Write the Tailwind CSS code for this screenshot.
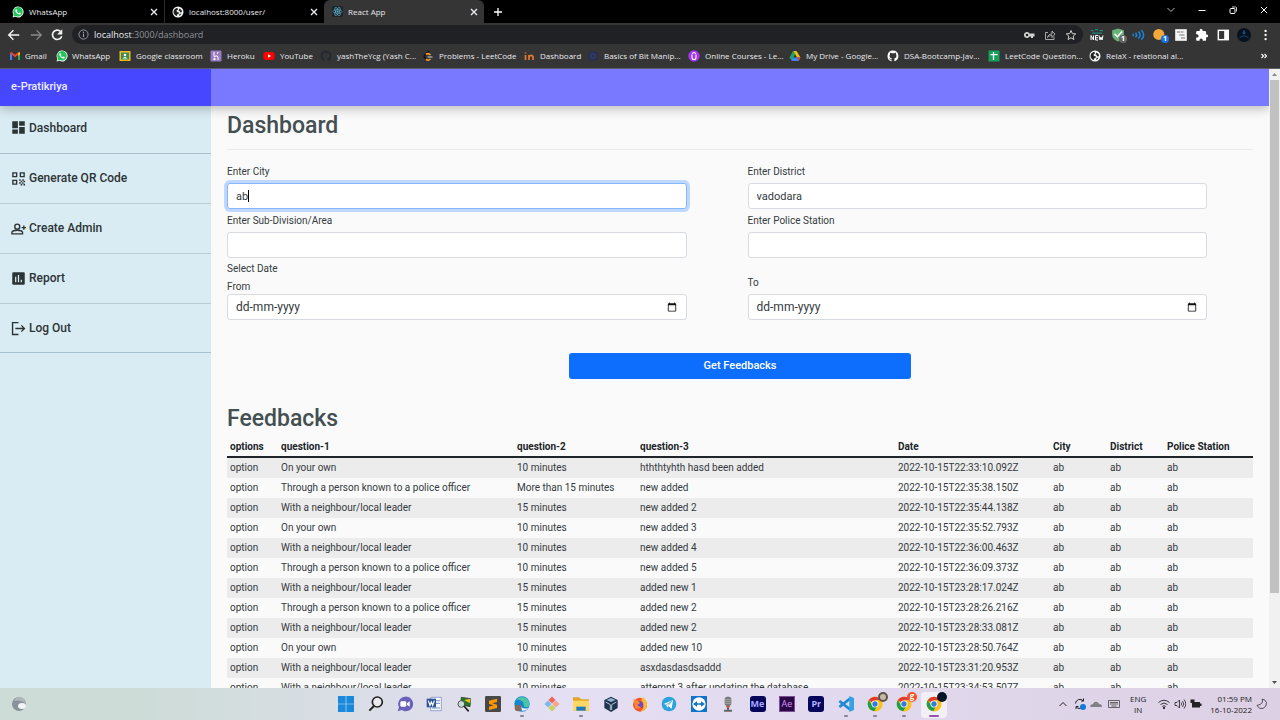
<!DOCTYPE html>
<html lang="en-IN">
<head>
<meta charset="utf-8">
<meta name="viewport" content="width=device-width, initial-scale=1">
<title>React App</title>
<script src="https://cdn.jsdelivr.net/npm/@tailwindcss/browser@4"></script>
</head>
<body class="flex h-screen flex-col overflow-hidden bg-[#fafafa] font-['Roboto',sans-serif] text-[#343a40]">

<svg class="hidden" aria-hidden="true">
  <symbol id="whatsapp" viewBox="0 0 24 24"><path fill="#fff" d="M1 23l1.700-5.600A11 11 0 1 1 7 21.600z"/><path fill="#25c45a" d="M2.800 21.200l1.300-4.300A9.500 9.500 0 1 1 7.500 20z"/><path fill="#fff" d="M8.500 6.500c-.8 0-2 1-2 2.700 0 3 5 8 8.500 8 1.700 0 2.800-1.200 2.800-2.500 0-.4-2.400-1.700-2.900-1.700-.4 0-1 1.500-1.500 1.500-.9 0-3.700-2.400-3.700-3.300 0-.4 1-1 1-1.600 0-.6-1-3.100-2.200-3.100z"/></symbol>
  <symbol id="globe" viewBox="0 0 24 24"><circle cx="12" cy="12" r="11" fill="#f1f3f4"/><path fill="#222" d="M4 8c2-3 5-4 7-4l1 3-3 2 1 3 4 1-1 3-3 1v3c-4-1-7-4-7-8zM15 5l4 3 1 4-3 1-2-3-2-1zM15 16l4-1-2 3-3 2z"/></symbol>
  <symbol id="react" viewBox="0 0 24 24"><rect width="24" height="24" rx="3" fill="#20232a"/><g fill="none" stroke="#5bb9d1" stroke-width="1.300"><ellipse cx="12" cy="12" rx="10" ry="4"/><ellipse cx="12" cy="12" rx="10" ry="4" transform="rotate(60 12 12)"/><ellipse cx="12" cy="12" rx="10" ry="4" transform="rotate(120 12 12)"/></g><circle cx="12" cy="12" r="2" fill="#5bb9d1"/></symbol>
  <symbol id="close" viewBox="0 0 10 10"><path d="M2 2l6 6M8 2L2 8" stroke="currentColor" stroke-width="1.400" fill="none"/></symbol>
  <symbol id="github" viewBox="0 0 24 24"><path fill="currentColor" d="M12 1a11 11 0 0 0-3.500 21.400c.6.100.8-.2.800-.5v-2c-3 .7-3.700-1.300-3.700-1.300-.5-1.300-1.200-1.600-1.200-1.600-1-.7.100-.7.100-.7 1.100.1 1.700 1.100 1.700 1.100 1 1.700 2.600 1.200 3.200.9.100-.7.400-1.200.7-1.500-2.400-.3-5-1.200-5-5.400 0-1.200.4-2.200 1.100-2.900-.1-.3-.5-1.400.1-2.900 0 0 1-.3 3 1.100a10.500 10.500 0 0 1 5.500 0c2.100-1.400 3-1.100 3-1.100.6 1.500.2 2.600.1 2.900.7.700 1.100 1.700 1.100 2.900 0 4.200-2.600 5.100-5 5.400.4.300.8 1 .8 2v3c0 .3.200.6.800.5A11 11 0 0 0 12 1z"/></symbol>
  <symbol id="calendar" viewBox="0 0 24 24"><path fill="#111" d="M20 3h-1V1h-2v2H7V1H5v2H4a2 2 0 0 0-2 2v16a2 2 0 0 0 2 2h16a2 2 0 0 0 2-2V5a2 2 0 0 0-2-2zm0 18H4V8h16z"/></symbol>
  <symbol id="chrome" viewBox="0 0 24 24"><circle cx="12" cy="12" r="11" fill="#fbc116"/><path fill="#e33b2e" d="M12 12L2.500 6.500a11 11 0 0 1 19 0L12 7z"/><path fill="#1e9e4a" d="M2.500 6.500a11 11 0 0 0 8.500 16.400L16 14l-8 0z"/><path fill="#fbc116" d="M21.500 6.500H12l4.300 8L11 23a11 11 0 0 0 10.500-16.500z"/><circle cx="12" cy="12" r="5.200" fill="#fff"/><circle cx="12" cy="12" r="4" fill="#2f7be6"/></symbol>
</svg>

<header class="shrink-0 font-['Open_Sans','Noto_Sans',sans-serif] text-[8px] text-[#e8eaed]">
  <!-- tab strip -->
  <div class="flex h-[23px] items-stretch bg-black">
    <div class="flex w-[165px] items-center border-r border-[#2a2a2a] pr-[5px] pl-3">
      <svg class="mr-[5px] h-3 w-3"><use href="#whatsapp"/></svg><span class="flex-1">WhatsApp</span>
      <button aria-label="Close WhatsApp tab"><svg class="h-2.5 w-2.5"><use href="#close"/></svg></button>
    </div>
    <div class="flex w-[159px] items-center pr-[5px] pl-[7px]">
      <svg class="mr-[5px] h-3 w-3"><use href="#globe"/></svg><span class="flex-1">localhost:8000/user/</span>
      <button aria-label="Close localhost tab"><svg class="h-2.5 w-2.5"><use href="#close"/></svg></button>
    </div>
    <div class="flex w-[160px] items-center rounded-t-md bg-[#353535] pr-[5px] pl-2">
      <svg class="mr-[5px] h-[11px] w-[11px]"><use href="#react"/></svg><span class="flex-1">React App</span>
      <button aria-label="Close React App tab"><svg class="h-2.5 w-2.5"><use href="#close"/></svg></button>
    </div>
    <button class="ml-2 w-3" aria-label="New tab"><svg class="h-3 w-3" viewBox="0 0 12 12"><path d="M6 2v8M2 6h8" stroke="#fff" stroke-width="1.300"/></svg></button>
    <div class="ml-auto flex h-[19px] items-center gap-[21px] pr-[11px]">
      <button aria-label="Search tabs"><svg class="h-2.5 w-2.5" viewBox="0 0 10 10"><path d="M1.500 3l3.500 3.500L8.500 3" stroke="#bbb" fill="none"/></svg></button>
      <button aria-label="Minimize"><svg class="h-2.5 w-2.5" viewBox="0 0 10 10"><path d="M1.500 5.500h7" stroke="#fff"/></svg></button>
      <button aria-label="Restore"><svg class="h-2.5 w-2.5" viewBox="0 0 10 10"><rect x="2" y="3.500" width="5" height="5" rx="1" stroke="#fff" fill="none"/><path d="M4 2h3.500a1 1 0 0 1 1 1v3.500" stroke="#ccc" fill="none"/></svg></button>
      <button aria-label="Close window"><svg class="h-2.5 w-2.5" viewBox="0 0 10 10"><path d="M2 2l6 6M8 2L2 8" stroke="#fff"/></svg></button>
    </div>
  </div>
  <!-- toolbar -->
  <div class="flex h-[23px] items-center bg-[#353535] pl-[7px]">
    <button class="mr-2 w-3.5" aria-label="Back"><svg class="h-3.5 w-3.5" viewBox="0 0 24 24"><path d="M21 12H4M11 4l-8 8 8 8" stroke="#f1f3f4" stroke-width="2.500" fill="none"/></svg></button>
    <button class="mr-[7px] w-3.5" aria-label="Forward"><svg class="h-3.5 w-3.5" viewBox="0 0 24 24"><path d="M3 12h17M13 4l8 8-8 8" stroke="#8a8a8a" stroke-width="2.200" fill="none"/></svg></button>
    <button class="mr-2 w-3.5" aria-label="Reload"><svg class="h-3.5 w-3.5" viewBox="0 0 24 24"><path d="M20 14a8 8 0 1 1-2-8" stroke="#f1f3f4" stroke-width="2.800" fill="none"/><path d="M21 2v9h-9z" fill="#f1f3f4"/></svg></button>
    <div class="flex h-[19px] flex-1 items-center rounded-full bg-[#202124] px-1.5">
      <svg class="mr-[5px] h-[11px] w-[11px]" viewBox="0 0 24 24"><circle cx="12" cy="12" r="10" stroke="#9aa0a6" stroke-width="2" fill="none"/><path d="M12 10.500v7M12 6v2.500" stroke="#9aa0a6" stroke-width="2.400"/></svg>
      <span class="flex-1 text-[9px] text-[#8f9398]"><span class="text-[#e8eaed]">localhost</span>:3000/dashboard</span>
      <div class="flex items-center gap-[9px]">
        <button aria-label="Passwords"><svg class="h-3 w-3" viewBox="0 0 24 24"><path fill="#d0d0d0" fill-rule="evenodd" d="M13 9a6 6 0 1 0 0 6h3v3h4v-3h3V9zM8 14.500a2.500 2.500 0 1 1 0-5 2.500 2.500 0 0 1 0 5z"/></svg></button>
        <button aria-label="Share"><svg class="h-3 w-3" viewBox="0 0 24 24"><path d="M8 7H3v14h17v-6M7 17c1-5 4-7 9-7V6M7 17c3-3 5-4 9-4v4l6-7-6-6v3" stroke="#b5b5b5" stroke-width="1.800" fill="none"/></svg></button>
        <button aria-label="Bookmark this page"><svg class="h-3 w-3" viewBox="0 0 24 24"><path d="M12 3l2.700 6.200 6.800.6-5.100 4.500 1.500 6.700-5.900-3.500L6.100 21l1.500-6.700-5.100-4.500 6.800-.6z" stroke="#d0d0d0" stroke-width="2" fill="none"/></svg></button>
      </div>
    </div>
    <div class="flex items-center gap-[7px] pr-2 pl-[7px]">
      <button aria-label="New extension"><svg class="h-3.5 w-3.5" viewBox="0 0 28 28"><path d="M2 5h5M10 3h6M19 5h7M4 10h20" stroke="#208579" stroke-width="2.500"/><path d="M2 24v-9l5 9v-9M16 15h-5v9h5M11 19.500h5M18 15l2 9 2-6 2 6 2-9" stroke="#fff" stroke-width="2" fill="none"/></svg></button>
      <button class="relative" aria-label="Shield, 1"><svg class="h-3.5 w-3.5" viewBox="0 0 24 24"><path d="M12 1l10 3v7c0 6-5 10-10 12C7 21 2 17 2 11V4z" fill="#67b279"/><path d="M6 10l5 5 8-9" stroke="#fff" stroke-width="2.500" fill="none"/></svg><span class="absolute top-[7px] left-2 h-2 w-2 rounded-sm bg-[#666] text-center text-[7px] leading-2 font-bold text-white">1</span></button>
      <button aria-label="Read aloud"><svg class="h-3.5 w-3.5" viewBox="0 0 24 24"><path d="M2 10v4M6 8q4 4 0 8M11 6q6 6 0 12M16 4q8 8 0 16" stroke="#1687e0" stroke-width="2.500" fill="none"/></svg></button>
      <button class="relative" aria-label="Notifications, 1"><svg class="h-3.5 w-3.5" viewBox="0 0 24 24"><circle cx="10" cy="11" r="9.500" fill="#f5a93a"/></svg><span class="absolute top-[7px] left-2 h-2 w-2 rounded-sm bg-[#1a73e8] text-center text-[7px] leading-2 font-bold text-white">1</span></button>
      <button aria-label="Notes"><svg class="h-3.5 w-3.5" viewBox="0 0 24 24"><rect x="2" y="2" width="20" height="20" fill="#f4f4f4"/><path d="M5 7h6M12 7h4M9 12h9M12 17h7" stroke="#777" stroke-width="1.800"/></svg></button>
      <button aria-label="Extensions"><svg class="h-3.5 w-3.5" viewBox="0 0 24 24"><path fill="#fff" d="M20 11h-1V7a2 2 0 0 0-2-2h-4V4a2.500 2.500 0 0 0-5 0v1H4a2 2 0 0 0-2 2v3.800h1.500a2.700 2.700 0 0 1 0 5.400H2V20c0 1.100.9 2 2 2h3.800v-1.500a2.700 2.700 0 0 1 5.400 0V22H17a2 2 0 0 0 2-2v-4h1a2.500 2.500 0 0 0 0-5z"/></svg></button>
      <button aria-label="Side panel"><svg class="h-3.5 w-3.5" viewBox="0 0 24 24"><rect x="4" y="4" width="17" height="16" stroke="#fff" stroke-width="2.500" fill="none"/><path fill="#fff" d="M14 4h7v16h-7z"/></svg></button>
      <button aria-label="Profile"><svg class="h-3.5 w-3.5" viewBox="0 0 24 24"><circle cx="12" cy="12" r="12" fill="#07111f"/><path d="M12 3l3 6-3 2-3-2z" fill="#1c4f80"/><path d="M4 17q8-7 16 0" stroke="#1c4a75" stroke-width="1.500" fill="none"/></svg></button>
      <button aria-label="Menu"><svg class="h-3.5 w-3.5" viewBox="0 0 24 24"><g fill="#fff"><circle cx="13" cy="5" r="2"/><circle cx="13" cy="12" r="2"/><circle cx="13" cy="19" r="2"/></g></svg></button>
    </div>
  </div>
  <!-- bookmarks -->
  <nav class="flex h-[23px] items-center border-b border-[#5c5c66] bg-[#353535] pb-0.5 pl-[9px] whitespace-nowrap" aria-label="Bookmarks">
    <a href="#" class="flex w-[47px] items-center gap-1"><svg class="h-3 w-3 shrink-0" viewBox="0 0 24 24"><path fill="#4285f4" d="M2 6h4v14H2z"/><path fill="#34a853" d="M18 6h4v14h-4z"/><path d="M3 5l9 7 9-7" stroke="#ea4335" stroke-width="4" fill="none"/><path fill="#fbbc04" d="M18 6l4-2v5l-4 3z"/></svg>Gmail</a>
    <a href="#" class="flex w-[63px] items-center gap-1"><svg class="h-3 w-3 shrink-0"><use href="#whatsapp"/></svg>WhatsApp</a>
    <a href="#" class="flex w-[91px] items-center gap-[5px]"><svg class="h-3 w-3 shrink-0" viewBox="0 0 24 24"><rect x="1" y="2" width="22" height="20" fill="#f4b928"/><rect x="4" y="5" width="16" height="14" fill="#3c8f50"/><circle cx="12" cy="10" r="2.500" fill="#fff"/><path d="M7 17q5-6 10 0z" fill="#fff"/></svg>Google classroom</a>
    <a href="#" class="flex w-[53px] items-center gap-[5px]"><svg class="h-3 w-3 shrink-0" viewBox="0 0 24 24"><rect x="1" y="1" width="22" height="22" rx="2" fill="#9a7bc0"/><path d="M8 4v9q8-3 8 1v6M16 4q0 3-2 4M8 16v4l3-2z" stroke="#fff" stroke-width="2" fill="none"/></svg>Heroku</a>
    <a href="#" class="flex w-[57px] items-center gap-[5px]"><svg class="h-3 w-3 shrink-0" viewBox="0 0 24 24"><rect x="1" y="4" width="22" height="16" rx="4" fill="#f00"/><path fill="#fff" d="M10 8.500v7l6-3.500z"/></svg>YouTube</a>
    <a href="#" class="flex w-[102px] items-center gap-[5px]"><svg class="h-3 w-3 shrink-0 text-[#24292f]"><use href="#github"/></svg>yashTheYcg (Yash C...</a>
    <a href="#" class="flex w-[101px] items-center gap-[5px]"><svg class="h-3 w-3 shrink-0" viewBox="0 0 24 24"><path d="M14 2L6 10q-3 3 0 6l3 3" stroke="#111" stroke-width="3" fill="none"/><path d="M8 9q4-4 9 1M8 18q4 5 9 0" stroke="#f2a33a" stroke-width="3" fill="none"/><path d="M11 14h10" stroke="#b3b3b3" stroke-width="2.500"/></svg>Problems - LeetCode</a>
    <a href="#" class="flex w-[64px] items-center gap-[5px]"><svg class="h-3 w-3 shrink-0" viewBox="0 0 24 24"><path d="M5 10v10M5 5v2M12 20V10M12 14q4-6 8-1v7" stroke="#e0782f" stroke-width="3.500" fill="none"/></svg>Dashboard</a>
    <a href="#" class="flex w-[101px] items-center gap-[5px]"><svg class="h-3 w-3 shrink-0" viewBox="0 0 24 24"><rect x="3" y="3" width="18" height="18" rx="3" fill="#2b3050"/><path d="M8 8h8v8H8z" stroke="#343d74" stroke-width="2" fill="none"/></svg>Basics of Bit Manip...</a>
    <a href="#" class="flex w-[101px] items-center gap-[5px]"><svg class="h-3 w-3 shrink-0" viewBox="0 0 24 24"><circle cx="12" cy="12" r="11.500" fill="#a435f0"/><path d="M8 9v6q0 4 4 4t4-4V9M8 7l4-2 4 2" stroke="#fff" stroke-width="2.200" fill="none"/></svg>Online Courses - Le...</a>
    <a href="#" class="flex w-[98px] items-center gap-[5px]"><svg class="h-3 w-3 shrink-0" viewBox="0 0 24 24"><path fill="#1fa463" d="M8 2h4l2 4-9 15-4-6z"/><path fill="#fbbc04" d="M9 2h6l8 13h-7z"/><path fill="#4285f4" d="M7 15h16l-4 7H5z"/><path fill="#ea4335" d="M17 15h6l-4 7z"/></svg>My Drive - Google...</a>
    <a href="#" class="flex w-[101px] items-center gap-[5px]"><svg class="h-3 w-3 shrink-0 text-white"><use href="#github"/></svg>DSA-Bootcamp-Jav...</a>
    <a href="#" class="flex w-[101px] items-center gap-[5px]"><svg class="h-3 w-3 shrink-0" viewBox="0 0 24 24"><rect x="1" y="1" width="22" height="22" fill="#169e5b"/><path d="M5 9h14M11 4v16" stroke="#fff" stroke-width="2.500"/></svg>LeetCode Question...</a>
    <a href="#" class="flex items-center gap-[5px]"><svg class="h-3 w-3 shrink-0"><use href="#globe"/></svg>RelaX - relational al...</a>
    <button class="mr-3 ml-auto" aria-label="More bookmarks"><svg class="h-2 w-2" viewBox="0 0 8 8"><path d="M1.500 2L3.500 4 1.500 6M4.500 2L6.500 4 4.500 6" stroke="#fff" stroke-width="1.100" fill="none"/></svg></button>
  </nav>
</header>

<div class="flex min-h-0 flex-1">
  <div class="flex min-w-0 flex-1 flex-col overflow-hidden">
    <div class="z-10 flex h-[37px] shrink-0 bg-[#7979ff] shadow-[0_3px_10px_rgba(0,0,0,0.25)]">
      <a href="#" class="flex w-[211px] items-center bg-[#4747ff] pl-[11px] text-[11px] font-medium text-[#eeeeff]">e-Pratikriya</a>
    </div>
    <div class="flex min-h-0 flex-1">
      <nav class="w-[211px] shrink-0 bg-[#d9ebf3] text-[12px] font-medium text-[#2d3436]" aria-label="Main">
        <a href="#" class="flex h-12 items-center gap-[3px] border-b border-[#a9c1cc] pb-1 pl-[11px]"><svg class="h-[15px] w-[15px]" viewBox="0 0 24 24" fill="currentColor"><path d="M2 2h9v11H2zM2 15h9v7H2zM13 11h9v11h-9zM13 2h9v7h-9z"/></svg>Dashboard</a>
        <a href="#" class="flex h-[50px] items-center gap-[3px] border-b border-[#b9cdd7] pb-px pl-[11px]"><svg class="h-[15px] w-[15px]" viewBox="0 0 24 24"><path d="M3 3h6v6H3zM15 3h6v6h-6zM3 15h6v6H3z" stroke="currentColor" stroke-width="2.200" fill="none"/><path fill="currentColor" d="M13 13h2.500v2.500H13zM15.500 15.500H18V18h-2.500zM18 13h2.500v2.500H18zM13 18h2.500v2.500H13zM20 15.500h2.500V18H20zM18 18h2v2.500h-2zM15.500 20.500H18V23h-2.500zM20 20.500h2.500V23H20z"/></svg>Generate QR Code</a>
        <a href="#" class="flex h-[50px] items-center gap-[3px] border-b border-[#b9cdd7] pb-px pl-[11px]"><svg class="h-[15px] w-[15px]" viewBox="0 0 24 24" fill="none" stroke="currentColor" stroke-width="2.200"><circle cx="10" cy="9" r="4"/><path d="M1.500 20.500v-2c0-5 17-5 17 0v2zM20.500 7v7M17 10.500h7"/></svg>Create Admin</a>
        <a href="#" class="flex h-[50px] items-center gap-[3px] border-b border-[#b9cdd7] pb-px pl-[11px]"><svg class="h-[15px] w-[15px]" viewBox="0 0 24 24"><rect x="2" y="2" width="20" height="20" rx="2" fill="currentColor"/><path d="M7.500 9v9M12 6.500V18M16.500 14v4" stroke="#d9ebf3" stroke-width="2"/></svg>Report</a>
        <a href="#" class="flex h-[49px] items-center gap-[3px] border-b border-[#a9c1cc] pl-[11px]"><svg class="h-[15px] w-[15px]" viewBox="0 0 24 24" fill="none" stroke="currentColor" stroke-width="2.200"><path d="M12 2.500H2.500v19H12M7 12h14M16.500 7l5 5-5 5"/></svg>Log Out</a>
      </nav>
      <main class="min-w-0 flex-1 overflow-hidden px-4 pt-[7px]">
        <h1 class="text-[23px] leading-[26px] font-medium text-[#434f51]">Dashboard</h1>
        <hr class="mt-2.5 border-[#ececec]">
        <form>
          <div class="grid grid-cols-2 gap-x-[61px] pt-3.5 pr-[46px] text-[10px] leading-4">
            <div class="flex flex-col">
              <label for="city" class="mb-[3px]">Enter City</label>
              <div class="relative">
                <input id="city" value="ab" class="h-[26px] w-full rounded-[3px] border border-[#86b7fe] bg-white px-2 text-[11px] text-[#343a40] caret-transparent ring-3 ring-[#bfd8fe] outline-none">
                <span class="absolute top-[7px] left-[21px] h-3 w-px bg-black"></span>
              </div>
            </div>
            <div class="flex flex-col">
              <label for="district" class="mb-[3px]">Enter District</label>
              <input id="district" value="vadodara" class="h-[26px] w-full rounded-[3px] border border-[#d8dce0] bg-white px-2 text-[11px] text-[#343a40]">
            </div>
            <div class="flex flex-col pt-1">
              <label for="area" class="mb-[3px]">Enter Sub-Division/Area</label>
              <input id="area" class="h-[26px] w-full rounded-[3px] border border-[#d8dce0] bg-white px-2 text-[11px]">
            </div>
            <div class="flex flex-col pt-1">
              <label for="station" class="mb-[3px]">Enter Police Station</label>
              <input id="station" class="h-[26px] w-full rounded-[3px] border border-[#d8dce0] bg-white px-2 text-[11px]">
            </div>
            <div class="flex flex-col pt-[3px]">
              <span class="mb-[3px]">Select Date</span>
              <label for="from" class="leading-[14px]">From</label>
              <div class="flex h-[26px] items-center rounded-[3px] border border-[#d8dce0] bg-white px-2">
                <input id="from" placeholder="dd-mm-yyyy" class="min-w-0 flex-1 bg-transparent text-[12px] outline-none placeholder:text-[#343a40]">
                <button type="button" aria-label="Pick from date"><svg class="h-3 w-3 p-px"><use href="#calendar"/></svg></button>
              </div>
            </div>
            <div class="flex flex-col justify-end">
              <label for="to" class="mb-[3px]">To</label>
              <div class="flex h-[26px] items-center rounded-[3px] border border-[#d8dce0] bg-white px-2">
                <input id="to" placeholder="dd-mm-yyyy" class="min-w-0 flex-1 bg-transparent text-[12px] outline-none placeholder:text-[#343a40]">
                <button type="button" aria-label="Pick to date"><svg class="h-3 w-3 p-px"><use href="#calendar"/></svg></button>
              </div>
            </div>
          </div>
          <button type="button" class="mx-auto mt-[33px] block h-[26px] w-1/3 rounded-[3px] bg-[#0d6efd] text-[11px] font-medium text-white">Get Feedbacks</button>
        </form>
        <h2 class="mt-[27px] text-[23px] leading-[26px] font-medium text-[#434f51]">Feedbacks</h2>
        <table class="mt-[5px] w-full table-fixed text-left text-[10px] leading-5 whitespace-nowrap [&_td]:px-[3px] [&_th]:px-[3px]">
          <colgroup><col class="w-[51px]"><col class="w-[236px]"><col class="w-[123px]"><col class="w-[258px]"><col class="w-[155px]"><col class="w-[57px]"><col class="w-[57px]"><col class="w-[89px]"></colgroup>
          <thead><tr class="border-b-2 border-[#212529] leading-[19px] font-bold text-[#212529]"><th>options</th><th>question-1</th><th>question-2</th><th>question-3</th><th>Date</th><th>City</th><th>District</th><th>Police Station</th></tr></thead>
          <tbody class="[&>tr:nth-child(odd)]:bg-[#ececec]">
            <tr><td>option</td><td>On your own</td><td>10 minutes</td><td>hththtyhth hasd been added</td><td>2022-10-15T22:33:10.092Z</td><td>ab</td><td>ab</td><td>ab</td></tr>
            <tr><td>option</td><td>Through a person known to a police officer</td><td>More than 15 minutes</td><td>new added</td><td>2022-10-15T22:35:38.150Z</td><td>ab</td><td>ab</td><td>ab</td></tr>
            <tr><td>option</td><td>With a neighbour/local leader</td><td>15 minutes</td><td>new added 2</td><td>2022-10-15T22:35:44.138Z</td><td>ab</td><td>ab</td><td>ab</td></tr>
            <tr><td>option</td><td>On your own</td><td>10 minutes</td><td>new added 3</td><td>2022-10-15T22:35:52.793Z</td><td>ab</td><td>ab</td><td>ab</td></tr>
            <tr><td>option</td><td>With a neighbour/local leader</td><td>10 minutes</td><td>new added 4</td><td>2022-10-15T22:36:00.463Z</td><td>ab</td><td>ab</td><td>ab</td></tr>
            <tr><td>option</td><td>Through a person known to a police officer</td><td>10 minutes</td><td>new added 5</td><td>2022-10-15T22:36:09.373Z</td><td>ab</td><td>ab</td><td>ab</td></tr>
            <tr><td>option</td><td>With a neighbour/local leader</td><td>15 minutes</td><td>added new 1</td><td>2022-10-15T23:28:17.024Z</td><td>ab</td><td>ab</td><td>ab</td></tr>
            <tr><td>option</td><td>Through a person known to a police officer</td><td>15 minutes</td><td>added new 2</td><td>2022-10-15T23:28:26.216Z</td><td>ab</td><td>ab</td><td>ab</td></tr>
            <tr><td>option</td><td>With a neighbour/local leader</td><td>15 minutes</td><td>added new 2</td><td>2022-10-15T23:28:33.081Z</td><td>ab</td><td>ab</td><td>ab</td></tr>
            <tr><td>option</td><td>On your own</td><td>10 minutes</td><td>added new 10</td><td>2022-10-15T23:28:50.764Z</td><td>ab</td><td>ab</td><td>ab</td></tr>
            <tr><td>option</td><td>With a neighbour/local leader</td><td>10 minutes</td><td>asxdasdasdsaddd</td><td>2022-10-15T23:31:20.953Z</td><td>ab</td><td>ab</td><td>ab</td></tr>
            <tr><td>option</td><td>With a neighbour/local leader</td><td>10 minutes</td><td>attempt 3 after updating the database</td><td>2022-10-15T23:34:53.507Z</td><td>ab</td><td>ab</td><td>ab</td></tr>
          </tbody>
        </table>
      </main>
    </div>
  </div>
  <!-- scrollbar -->
  <div class="flex w-[11px] shrink-0 flex-col items-center bg-[#f1f1f1]" aria-hidden="true">
    <svg class="h-[11px] w-[11px] shrink-0" viewBox="0 0 11 11"><path d="M3 7h5L5.500 4z" fill="#8a8a8a"/></svg>
    <div class="w-full flex-1 px-px"><div class="h-[86%] bg-[#c1c1c1]"></div></div>
    <svg class="h-[11px] w-[11px] shrink-0" viewBox="0 0 11 11"><path d="M3 4h5L5.500 7z" fill="#505050"/></svg>
  </div>
</div>

<footer class="grid h-8 shrink-0 grid-cols-[1fr_auto_1fr] items-center bg-linear-to-r from-[#cddcd7] from-10% via-[#e5dff4] via-45% to-[#dcd0e4] font-['Open_Sans','Noto_Sans',sans-serif] text-[8px] text-[#222]">
  <button class="ml-3 w-4" aria-label="Widgets"><svg class="h-4 w-4" viewBox="0 0 16 16"><circle cx="7" cy="8" r="7" fill="#89929a"/><path d="M7 1a7 7 0 0 1 7 7q-5-5-12-3 2-4 5-4z" fill="#b0b6bb"/><ellipse cx="10" cy="10" rx="4" ry="3" fill="#f2f4f5"/></svg></button>
  <div class="grid w-[617px] grid-cols-[repeat(21,minmax(0,1fr))] [&>button]:flex [&>button]:h-8 [&>button]:flex-col [&>button]:items-center [&>button]:pt-2 [&_svg]:h-4 [&_svg]:w-4">
    <button aria-label="Start"><svg viewBox="0 0 24 24"><path fill="#1889dc" d="M0 0h11.500v11.500H0zM12.500 0H24v11.500H12.500zM0 12.500h11.500V24H0zM12.500 12.500H24V24H12.500z"/></svg></button>
    <button aria-label="Search"><svg viewBox="0 0 24 24"><circle cx="14" cy="9" r="7.500" stroke="#222" stroke-width="2.500" fill="#ffffff60"/><path d="M9 15l-7 7" stroke="#222" stroke-width="3"/></svg></button>
    <button aria-label="Chat"><svg viewBox="0 0 24 24"><path fill="#6a62b8" d="M12 1a11 11 0 1 1-5 20l-6 2 2-6A11 11 0 0 1 12 1z"/><rect x="5" y="8" width="9" height="8" rx="2" fill="#fff"/><path fill="#fff" d="M15 11l4-3v8l-4-3z"/></svg></button>
    <button aria-label="Word"><svg viewBox="0 0 24 24"><path fill="#f7f9fd" stroke="#6b82b8" d="M7 2h16v20H7z"/><path d="M15 7h6M15 11h6M9 18h12" stroke="#6f8fc8" stroke-width="1.500"/><rect x="1" y="4" width="14" height="13" fill="#2f5597"/><path d="M3.500 7l2.500 7 2-5 2 5 2.500-7" stroke="#fff" stroke-width="1.800" fill="none"/></svg></button>
    <button aria-label="Image viewer"><svg viewBox="0 0 24 24"><path fill="#272" stroke="#222" d="M8 2l14 2-1 12L7 13z"/><path fill="#e9c02b" d="M12 6l10-2-1 7z"/><circle cx="8" cy="12" r="5" fill="#c7ddd5" stroke="#555" stroke-width="1.500"/><path d="M12 15l7 8" stroke="#222" stroke-width="2.500"/></svg></button>
    <button aria-label="Sublime Text"><svg viewBox="0 0 24 24"><rect width="24" height="24" rx="2" fill="#484848"/><path fill="#ff9800" d="M6 7l12-3v5l-7 2 7 2v5L6 21v-5l7-2-7-2z"/></svg></button>
    <button aria-label="Edge"><svg viewBox="0 0 24 24"><circle cx="12" cy="12" r="11.500" fill="#1686cf"/><path fill="#4cc5a5" d="M3 6A11.500 11.500 0 0 1 23.500 13c-1 5-9 5-9 1 1-6-6-9-11.500-8z"/><path fill="#eaf1f7" d="M10 14q2 7 12 4-4 5-10 4z"/><circle cx="6" cy="18" r="5" fill="#8a6756"/></svg><i class="mt-[3px] h-0.5 w-1 rounded-full bg-[#858491]"></i></button>
    <button aria-label="Git"><svg viewBox="0 0 24 24"><g transform="rotate(45 12 12)"><path fill="#ee6656" d="M4 4h7.500v7.500H4z"/><path fill="#7db8e8" d="M4 12.500h7.500V20H4z"/><path fill="#f5a58c" d="M12.500 4H20v7.500h-7.500z"/><path fill="#c5d35c" d="M12.500 12.500H20V20h-7.500z"/></g></svg></button>
    <button aria-label="File Explorer"><svg viewBox="0 0 24 24"><path fill="#e2a529" d="M0 2h9l3 3h12v17H0z"/><path fill="#ffd766" d="M0 7h24v15H0z"/><path fill="#1b7cc4" d="M5 16h14v6H5z"/></svg><i class="mt-[3px] h-0.5 w-1 rounded-full bg-[#858491]"></i></button>
    <button aria-label="VirtualBox"><svg viewBox="0 0 24 24"><path fill="#20334f" d="M12 1l10 5v12l-10 6-10-6V6z"/><path fill="#8fb3d0" d="M5 6l7-3 7 3-7 3z"/><path d="M4 9l7 4v8M20 9l-7 4v8" stroke="#a8c0d4" stroke-width="1.500" fill="none"/></svg></button>
    <button aria-label="Firefox"><svg viewBox="0 0 24 24"><circle cx="12" cy="13" r="10.500" fill="#f5532f"/><path fill="#ffbd2e" d="M15 1q9 6 7 14-2 8-10 8 8-5 4-10-3-5-1-12z"/><circle cx="12" cy="13" r="5" fill="#7944c3"/><path fill="#f98b2b" d="M2 4q3 3 7 3l3 4-4 2q1 4 6 3-4 5-9 2z"/></svg></button>
    <button aria-label="Telegram"><svg viewBox="0 0 24 24"><circle cx="12" cy="12" r="11" fill="#2ca3dc"/><path fill="#fff" d="M4 12l14-6-2 13-5-4-2 3-1-5z"/><path d="M8 13l8-5-5 6" stroke="#2b90c0" fill="none"/></svg></button>
    <button aria-label="TeamViewer"><svg viewBox="0 0 24 24"><rect width="24" height="24" fill="#0e73c9"/><circle cx="12" cy="12" r="10" fill="#fff"/><path fill="#0e73c9" d="M3 12l6-4v3h6V8l6 4-6 4v-3H9v3z"/></svg></button>
    <button aria-label="Recorder"><svg viewBox="0 0 24 24"><rect x="7" y="1" width="10" height="14" rx="4" fill="#777"/><path d="M7 5h10M7 8h10M7 11h10" stroke="#bbb"/><path d="M12 15v6M6 22h12" stroke="#666" stroke-width="3"/><path d="M9 16h6" stroke="#c65f3c" stroke-width="2"/></svg></button>
    <button aria-label="Media Encoder"><span class="h-4 w-4 rounded-[3px] bg-[#05055c] text-center text-[9px] leading-4 font-bold text-[#a7a7ff]">Me</span></button>
    <button aria-label="After Effects"><span class="h-4 w-4 border border-[#7b4d91] bg-[#2c0747] text-center text-[9px] leading-3.5 text-[#cf9af5]">Ae</span></button>
    <button aria-label="Premiere Pro"><span class="h-4 w-4 rounded-[3px] bg-[#05055c] text-center text-[9px] leading-4 font-bold text-[#b5b5ff]">Pr</span></button>
    <button aria-label="Visual Studio Code"><svg viewBox="0 0 24 24"><path d="M2 7.500L18 20M2 16.500L18 4" stroke="#1f8ad2" stroke-width="4"/><path fill="#35a2e6" d="M17 0l7 3v18l-7 3z"/></svg><i class="mt-[3px] h-0.5 w-1 rounded-full bg-[#858491]"></i></button>
    <button aria-label="Chrome, profile 1" class="relative"><svg><use href="#chrome"/></svg><b class="absolute top-1 right-0.5 h-2.5 w-2.5 rounded-full border-2 border-[#5c5348] bg-[#c5b9a8]"></b><i class="mt-[3px] h-0.5 w-1 rounded-full bg-[#858491]"></i></button>
    <button aria-label="Chrome, profile 2" class="relative"><svg><use href="#chrome"/></svg><b class="absolute top-1 right-0.5 h-2.5 w-2.5 rounded-full bg-[#ee5128] text-center text-[8px] leading-2 text-white">g</b><i class="mt-[3px] h-0.5 w-1 rounded-full bg-[#858491]"></i></button>
    <button aria-label="Chrome, profile 3" class="relative"><span class="absolute inset-x-0.5 top-1 bottom-0.5 rounded-sm bg-white/60"></span><svg class="z-0"><use href="#chrome"/></svg><b class="absolute top-1 right-0.5 h-2.5 w-2.5 rounded-full bg-[#071426]"></b><i class="z-0 mt-[3px] h-0.5 w-2.5 rounded-full bg-[#9a4fb5]"></i></button>
  </div>
  <div class="flex items-center justify-end pr-3">
    <button class="mr-1.5" aria-label="Show hidden icons"><svg class="h-2.5 w-2.5" viewBox="0 0 10 10"><path d="M1.500 7L5 3.500 8.500 7" stroke="#222" fill="none"/></svg></button>
    <svg class="mr-1 h-3 w-3" viewBox="0 0 24 24"><path d="M3 11a9 9 0 0 1 16-5V1M19 6h-5M4 22v-5h5M4 17q3 5 9 4" stroke="#222" stroke-width="2" fill="none"/><circle cx="18" cy="18" r="6" fill="#0f7bd8"/></svg>
    <svg class="mr-1.5 h-3 w-3" viewBox="0 0 24 24"><path d="M1 18q-2-5 5-6 3-6 8-4 3 1 4 4 6 0 6 6z" fill="#808086"/></svg>
    <svg class="mr-2.5 h-3 w-3" viewBox="0 0 24 24"><path d="M1 5h22v14H1zM4 9h16M4 12h16M7 16h10" stroke="#555" stroke-width="1.800" fill="none"/></svg>
    <div class="mr-3 text-center leading-[11px]">ENG<br>IN</div>
    <svg class="mr-1 h-3 w-3" viewBox="0 0 24 24"><path d="M1 9q11-9 22 0M5 13q7-6 14 0M8.500 17q3.500-3 7 0" stroke="#222" stroke-width="1.800" fill="none"/><circle cx="12" cy="20" r="2"/></svg>
    <svg class="mr-1 h-3 w-3" viewBox="0 0 24 24"><path d="M2 9h4l5-5v16l-5-5H2zM14 9q3 3 0 6M17 6q5 6 0 12M20 3q7 9 0 18" stroke="#222" stroke-width="1.600" fill="none"/></svg>
    <svg class="mr-2 h-3 w-3" viewBox="0 0 24 24"><path d="M4 8h16v11H4zM20 11h3v5h-3z" fill="#222"/><path d="M1 3h8v7H1z" fill="#222"/></svg>
    <div class="mr-1 text-right leading-[11px]">01:59 PM<br>16-10-2022</div>
    <svg class="h-3 w-3" viewBox="0 0 24 24"><path d="M12 2q5 9-10 13 4 8 12 6 8-4 7-12-2-6-9-7z" stroke="#333" stroke-width="1.600" fill="none"/></svg>
  </div>
</footer>
</body>
</html>
